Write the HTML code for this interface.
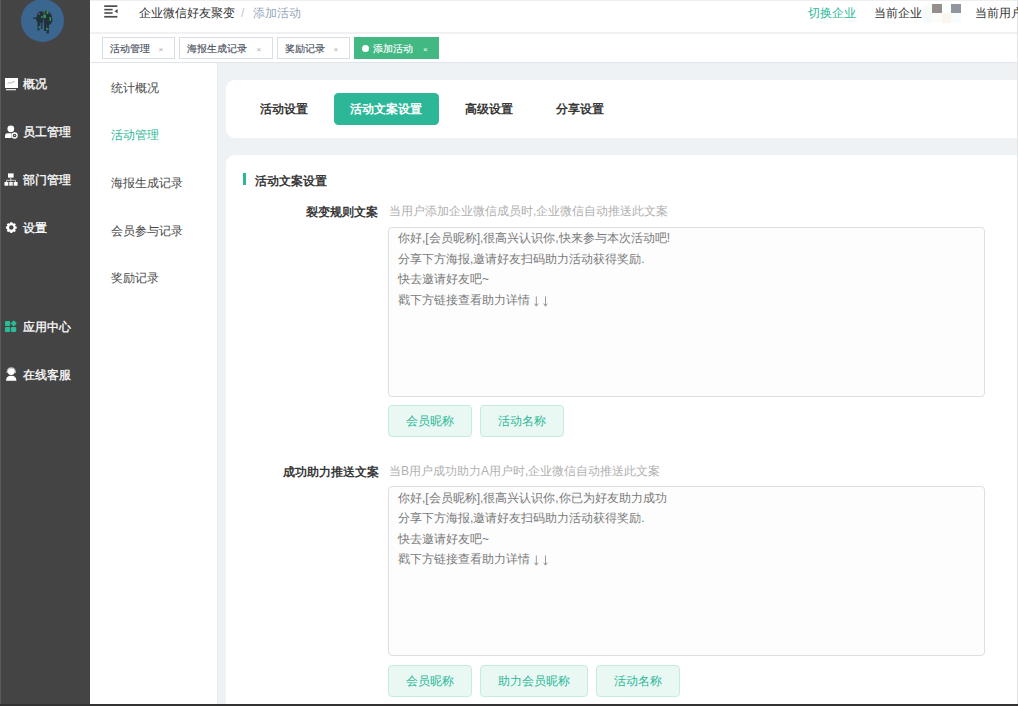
<!DOCTYPE html>
<html><head><meta charset="utf-8">
<style>
*{box-sizing:border-box;margin:0;padding:0}
html,body{width:1018px;height:706px;overflow:hidden;background:#fff;font-family:"Liberation Sans",sans-serif;font-size:12px;color:#333}
div,span,svg{position:absolute;white-space:nowrap}
.mi{left:23px;color:#fff;line-height:16px;-webkit-text-stroke:0.3px #fff}
.tag{top:37px;height:22px;border:1px solid #d9dde6;background:#fff;color:#4a4f5c;font-size:10.4px;line-height:21px;padding-left:7px;-webkit-text-stroke:0.15px #4a4f5c}
.tag .x{top:1px;font-size:8px;color:#aaa;-webkit-text-stroke:0}
.si{left:111px;line-height:16px;color:#484848}
.card{background:#fff;border-radius:9px}
.tab{font-weight:bold;line-height:16px;color:#383838}
.btn{height:32px;border:1px solid #c6ebe1;background:#eaf8f4;border-radius:4px;color:#2cb898;line-height:30px;text-align:center}
.ta{left:388px;width:597px;height:170px;border:1px solid #dfdfdf;border-radius:4px;background:#fdfdfd}
.tl{left:398px;color:#7a7a7a;line-height:20.5px}
.lab{font-weight:bold;line-height:16px;color:#383838}
.hint{left:389px;line-height:16px;color:#b0b0b0}
</style></head><body><div id="wrap" style="left:0;top:0;width:1018px;height:706px">
<!-- left dark sidebar -->
<div style="left:0;top:0;width:90px;height:706px;background:#444"></div>
<div style="left:0;top:0;width:1px;height:706px;background:#5a5a5a"></div>
<div style="left:21px;top:-1px;width:43px;height:43px;border-radius:50%;background:#3b6690"></div>
<svg style="left:0;top:0" width="90" height="45" viewBox="0 0 90 45">
  <defs><filter id="bl" x="-20%" y="-20%" width="140%" height="140%"><feGaussianBlur stdDeviation="0.45"/></filter></defs>
  <g filter="url(#bl)">
  <g fill="#18221f" opacity="0.78">
    <path d="M37.5,13.5 Q39.5,10.5 42.5,11.5 L43.5,14 L43,22 L41,23 L38,23 L36,20 Z"/>
    <path d="M37.5,22 L40,22 L39.5,30.5 L37.5,30.5 Z"/>
    <path d="M40.5,22 L42.8,22 L42.5,29 L40.8,29 Z" opacity="0.7"/>
    <path d="M43.5,12 Q45.5,9.5 48.5,11 L51.5,15 L52.5,21 L50.5,24.5 L47,25 L44,24 L43.5,18 Z"/>
    <path d="M44,23 L46.5,23 L46,31 L44.2,31 Z"/>
    <path d="M46.5,24 L49,24 L48.8,33.5 L46.6,33.5 Z"/>
    <rect x="33" y="17.6" width="4" height="1.2"/>
  </g>
  <g fill="#3cbd5e" opacity="0.7">
    <rect x="43.5" y="14.5" width="2.5" height="3.5"/><rect x="46.5" y="10.5" width="2" height="3.5"/><rect x="49.5" y="17" width="1.5" height="4"/>
    <rect x="38.5" y="26.5" width="1.6" height="1.6"/><rect x="46.5" y="28" width="1.8" height="1.8"/><rect x="41" y="16" width="1.5" height="1.8"/>
  </g>
  <g fill="#d08060" opacity="0.5"><rect x="38.5" y="13" width="1.4" height="1.8"/><rect x="43.8" y="11.5" width="1.4" height="1.8"/></g>
  </g>
</svg>
<svg style="left:0;top:0" width="90" height="400" viewBox="0 0 90 400">
  <rect x="5" y="78" width="13" height="10" fill="#fff"/>
  <polyline points="7.5,84 9.5,82 11,83.5 12.5,82 14.5,81.5" fill="none" stroke="#b9a9b5" stroke-width="1"/>
  <rect x="6" y="89" width="10" height="1.3" fill="#ddd"/>
  <circle cx="10.8" cy="128.8" r="3.4" fill="#fff"/>
  <path d="M5,138 L5,135.5 Q5,133.3 7.3,133.3 L11.5,133.3 L11.5,138 Z" fill="#fff"/>
  <circle cx="14.6" cy="135.5" r="2.5" fill="none" stroke="#fff" stroke-width="1.3"/>
  <circle cx="14.6" cy="135.5" r="0.7" fill="#ccc"/>
  <rect x="8" y="173.4" width="5.6" height="4.2" fill="#fff"/>
  <rect x="10.3" y="177.5" width="1" height="4" fill="#ddd"/>
  <path d="M6.5,182 L6.5,180.3 L15.5,180.3 L15.5,182" fill="none" stroke="#ccc" stroke-width="1"/>
  <rect x="4.5" y="182" width="3.8" height="3.7" fill="#fff"/>
  <rect x="9.2" y="182" width="3.6" height="3.7" fill="#eee"/>
  <rect x="13.7" y="182" width="3.9" height="3.7" fill="#fff"/>
  <g transform="translate(11.3,227.6)">
    <circle r="3.4" fill="none" stroke="#fff" stroke-width="2.3"/>
    <g fill="#fff">
      <rect x="-1.1" y="-5.4" width="2.2" height="1.6"/><rect x="-1.1" y="3.8" width="2.2" height="1.6"/>
      <rect x="-5.4" y="-1.1" width="1.6" height="2.2"/><rect x="3.8" y="-1.1" width="1.6" height="2.2"/>
      <g transform="rotate(45)"><rect x="-1.1" y="-5.4" width="2.2" height="1.6"/><rect x="-1.1" y="3.8" width="2.2" height="1.6"/>
      <rect x="-5.4" y="-1.1" width="1.6" height="2.2"/><rect x="3.8" y="-1.1" width="1.6" height="2.2"/></g>
    </g>
  </g>
  <g fill="#2bbb97">
    <rect x="5" y="321" width="5.2" height="5" rx="1"/>
    <rect x="11.55" y="321.2" width="4.4" height="4.4" rx="0.8" transform="rotate(45 13.75 323.4)"/>
    <rect x="5" y="327" width="5.2" height="5" rx="1"/>
    <rect x="11" y="327" width="5.2" height="5" rx="1"/>
  </g>
  <path d="M6.5,373 Q6.5,367.3 11.2,367.3 Q16,367.3 16,373 Z" fill="#ddd" opacity="0.8"/>
  <circle cx="11.2" cy="371.8" r="3.3" fill="#fff"/>
  <path d="M6,380.8 Q6,375.8 11.2,375.8 Q16.4,375.8 16.4,380.8 Z" fill="#fff"/>
</svg>
<div class="mi" style="top:76px">概况</div>
<div class="mi" style="top:124px">员工管理</div>
<div class="mi" style="top:172px">部门管理</div>
<div class="mi" style="top:220px">设置</div>
<div class="mi" style="top:319px">应用中心</div>
<div class="mi" style="top:367px">在线客服</div>

<!-- header -->
<div style="left:90px;top:0;width:928px;height:1px;background:#efefef"></div>
<div style="left:90px;top:32px;width:928px;height:2px;background:#f1f1f1"></div>
<svg style="left:104px;top:0" width="16" height="20" viewBox="104 0 16 20">
  <g fill="#4d4d4d">
    <rect x="104.2" y="5.3" width="13.1" height="1.7"/>
    <rect x="104.3" y="8.8" width="8.3" height="1.6"/>
    <rect x="104.3" y="12.2" width="8.3" height="1.6"/>
    <rect x="104.2" y="15.9" width="13.1" height="1.7"/>
    <path d="M117.6,9.1 L117.6,13.3 L114.4,11.2 Z"/>
  </g>
</svg>
<div style="left:139px;top:5px;line-height:16px;color:#333">企业微信好友聚变</div>
<div style="left:241px;top:5px;line-height:16px;color:#c0c4cc">/</div>
<div style="left:253px;top:5px;line-height:16px;color:#97a8be">添加活动</div>
<div style="left:808px;top:5px;line-height:16px;color:#2cb898">切换企业</div>
<div style="left:874px;top:5px;line-height:16px;color:#333">当前企业</div>
<div style="left:923px;top:3px;width:40px;height:19px;">
  <div style="left:-1px;top:1px;width:12px;height:19px;background:#f6fafc;border-radius:8px 0 0 8px"></div><div style="left:0;top:1px;width:9px;height:9px;background:#f6fcf8;border-radius:8px 0 0 0"></div>
  <div style="left:9px;top:1px;width:10px;height:9px;background:#948e8d"></div>
  <div style="left:9px;top:10px;width:10px;height:10px;background:#fdfcf8"></div>
  <div style="left:19px;top:10px;width:9px;height:10px;background:#fdf5f0"></div><div style="left:19px;top:1px;width:9px;height:9px;background:#fbfefe"></div>
  <div style="left:28px;top:1px;width:10px;height:9px;background:#8f969d"></div>
  <div style="left:28px;top:10px;width:10px;height:10px;background:#f8fcfd"></div>
</div>
<div style="left:975px;top:5px;line-height:16px;color:#333;z-index:3">当前用户</div>

<!-- tags -->
<div style="left:90px;top:62px;width:928px;height:1px;background:#e1e4eb"></div>
<div class="tag" style="left:102px;width:73px">活动管理<span class="x" style="left:55.5px">×</span></div>
<div class="tag" style="left:179px;width:94px">海报生成记录<span class="x" style="left:76.5px">×</span></div>
<div class="tag" style="left:277px;width:73px">奖励记录<span class="x" style="left:55.5px">×</span></div>
<div class="tag" style="left:354px;width:85px;background:#42b983;border-color:#42b983;color:#fff;padding-left:18px;-webkit-text-stroke:0.15px #fff">添加活动<span class="x" style="left:68px;color:#fff">×</span>
  <span style="left:7px;top:7px;width:7px;height:7px;border-radius:50%;background:#fff"></span></div>

<!-- secondary menu -->
<div class="si" style="top:80px">统计概况</div>
<div class="si" style="top:127px;color:#2cb898">活动管理</div>
<div class="si" style="top:175px">海报生成记录</div>
<div class="si" style="top:223px">会员参与记录</div>
<div class="si" style="top:270px">奖励记录</div>

<!-- main -->
<div style="left:217px;top:63px;width:801px;height:643px;background:#eff2f5"></div>
<div style="left:216.5px;top:63px;width:1.5px;height:641px;background:#e9ebee"></div>
<div class="card" style="left:226px;top:79.5px;width:800px;height:58px"></div>
<div style="left:334px;top:92.5px;width:105px;height:32.5px;background:#2cb898;border-radius:4.5px"></div>
<div class="tab" style="left:260px;top:101px">活动设置</div>
<div class="tab" style="left:350px;top:101px;color:#fff">活动文案设置</div>
<div class="tab" style="left:465px;top:101px">高级设置</div>
<div class="tab" style="left:556px;top:101px">分享设置</div>

<div class="card" style="left:226px;top:155px;width:800px;height:600px"></div>
<div style="left:243px;top:173px;width:3px;height:12px;background:#2cb898"></div>
<div class="tab" style="left:255px;top:173px">活动文案设置</div>

<div class="lab" style="left:306px;top:204px">裂变规则文案</div>
<div class="hint" style="top:203px">当用户添加企业微信成员时,企业微信自动推送此文案</div>
<div class="ta" style="top:227px"></div>
<div class="tl" style="top:228.4px">你好,[会员昵称],很高兴认识你,快来参与本次活动吧!<br>分享下方海报,邀请好友扫码助力活动获得奖励.<br>快去邀请好友吧~<br>戳下方链接查看助力详情</div>
<svg style="left:530px;top:295px" width="22" height="14" viewBox="0 0 22 14"><g fill="none" stroke="#999" stroke-width="1"><path d="M6.3,1.5 V11 M4.5,8.6 L6.3,11.2 L8.1,8.6"/><path d="M15.5,1.5 V11 M13.7,8.6 L15.5,11.2 L17.3,8.6"/></g></svg>
<div class="btn" style="left:388px;top:405px;width:84px">会员昵称</div>
<div class="btn" style="left:480px;top:405px;width:84px">活动名称</div>

<div class="lab" style="left:283px;top:464px">成功助力推送文案</div>
<div class="hint" style="top:463px">当B用户成功助力A用户时,企业微信自动推送此文案</div>
<div class="ta" style="top:486px"></div>
<div class="tl" style="top:487.7px">你好,[会员昵称],很高兴认识你,你已为好友助力成功<br>分享下方海报,邀请好友扫码助力活动获得奖励.<br>快去邀请好友吧~<br>戳下方链接查看助力详情</div>
<svg style="left:530px;top:554px" width="22" height="14" viewBox="0 0 22 14"><g fill="none" stroke="#999" stroke-width="1"><path d="M6.3,1.5 V11 M4.5,8.6 L6.3,11.2 L8.1,8.6"/><path d="M15.5,1.5 V11 M13.7,8.6 L15.5,11.2 L17.3,8.6"/></g></svg>
<div class="btn" style="left:388px;top:665px;width:84px">会员昵称</div>
<div class="btn" style="left:480px;top:665px;width:108px">助力会员昵称</div>
<div class="btn" style="left:596px;top:665px;width:84px">活动名称</div>

<div style="left:1017px;top:0;width:1px;height:706px;background:#e4e4e4"></div>
<div style="left:0;top:704px;width:1018px;height:2px;background:#333"></div>
</div></body></html>
